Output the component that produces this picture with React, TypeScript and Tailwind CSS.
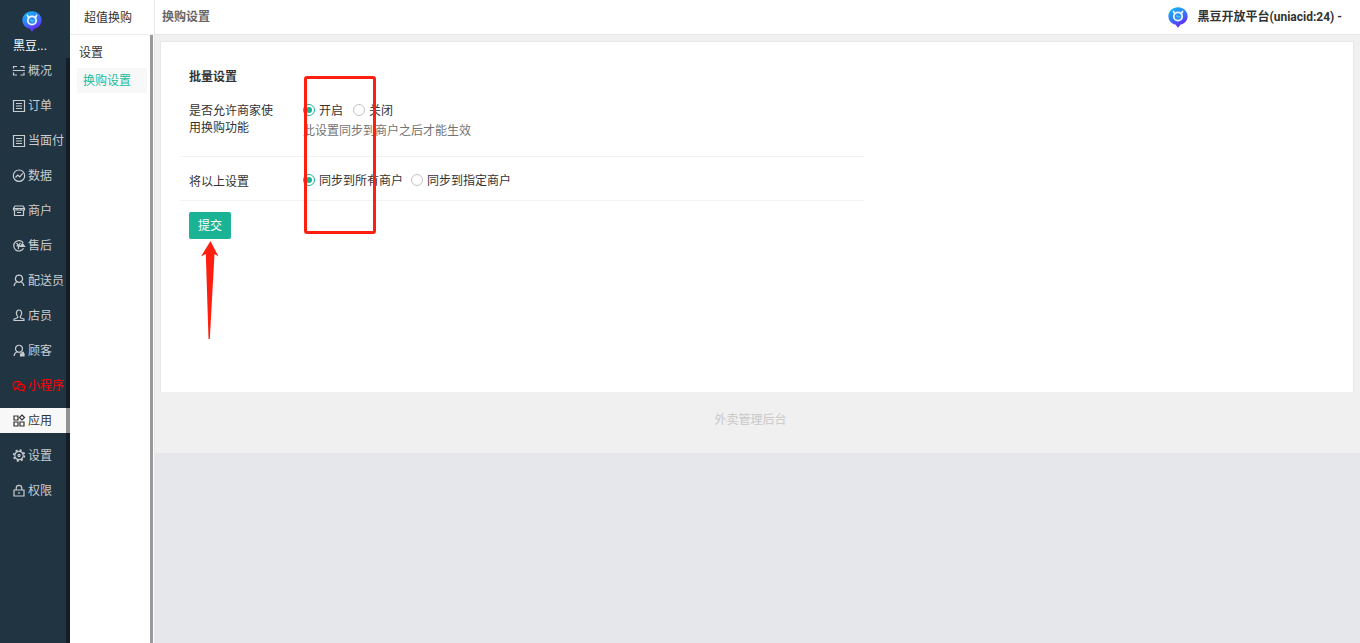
import React from "react";

type IconName =
  | "scan"
  | "list"
  | "chart"
  | "shop"
  | "refund"
  | "rider"
  | "clerk"
  | "customer"
  | "wechat"
  | "apps"
  | "gear"
  | "lock";

const iconShapes: Record<IconName, React.ReactNode> = {
  scan: (
    <path d="M1.5 4.5v-2H5M8.500 2.500h3.500v2M1.500 8.500v2.500H5M8.500 11H12V8.500M.8 6.500h12" />
  ),
  list: (
    <>
      <path d="M1.500 1.500v11h11v-11zM.8 1.500h12M4 4.500h6M4 7h6M4 9.500h6" />
    </>
  ),
  chart: (
    <>
      <circle cx="7" cy="6.700" r="5.700" />
      <path d="M3.500 8.500 5.700 6l2 1.800 3-3.400" />
    </>
  ),
  shop: (
    <>
      <path d="M3 2h8l1.500 2.500V6h-11V4.500zM1.500 4.500h11M2.500 6v5.500h9V6" />
      <path d="M5 8.500h4M5 4.500V6M9 4.500V6" />
    </>
  ),
  refund: (
    <>
      <path d="M11.500 9.300a5.200 5.200 0 1 1-.3-5.500" />
      <path d="m4.500 3.800 2 2.700 2-2.700M6.500 6.500v3.700M4.500 6.800h4" />
      <path d="M8.500 7.300h4L10.500 4.800z" fill="currentColor" />
    </>
  ),
  rider: (
    <path d="M7 1.200a3.500 3.500 0 0 1 1.700 6.600c2 .6 3 2 3.200 4.200M7 1.200a3.500 3.500 0 0 0-1.700 6.600c-2 .6-3 2-3.200 4.200M5.300 7.800c1 .6 2.400.6 3.400 0" />
  ),
  clerk: (
    <path d="M7 1C5 1 4.400 2.600 4.400 4.200c0 1.400.5 2.500 1.300 3.200v1.300L2 10.200v1.300h10v-1.300L8.300 8.700V7.400c.8-.7 1.300-1.800 1.300-3.200C9.600 2.600 9 1 7 1z" />
  ),
  customer: (
    <>
      <path d="M2.100 12c.2-2.200 1.200-3.600 3.200-4.200a3.500 3.500 0 1 1 3.400 0c-1 .6-2.400.6-3.400 0" />
      <path d="M8.500 9.800h3.500V12H8.500zM9.300 8.300h2v1.500" fill="currentColor" />
    </>
  ),
  wechat: (
    <>
      <path d="M5 9.400c-2.200 0-3.900-1.500-3.900-3.400C1.100 4 2.900 2.400 5.100 2.400c2 0 3.700 1.200 4 2.900" />
      <path d="M3 9l-.3 1.500 1.800-1" />
      <path d="M9.200 5.400c2 0 3.600 1.300 3.600 3 0 .9-.5 1.700-1.200 2.200l.3 1.300-1.500-.7c-2.700.5-4.800-.9-4.800-2.800 0-1.700 1.600-3 3.600-3z" />
      <path d="M3.300 5.200h1M6 5.200h1M7.300 8h1M10 8h1" />
    </>
  ),
  apps: (
    <>
      <path d="M2 2h4v4H2zM2 8h4v4H2zM8 8h4v4H8z" />
      <path d="m10 1 2.500 2.500L10 6 7.500 3.500z" />
    </>
  ),
  gear: (
    <>
      <circle cx="7" cy="6.500" r="4.200" />
      <circle cx="7" cy="6.500" r="5.400" strokeWidth="1.600" strokeDasharray="2.120 2.120" />
      <circle cx="7" cy="6.500" r="1.100" />
    </>
  ),
  lock: (
    <>
      <path d="M2 6h10v6H2zM4.200 6V4.200a2.800 2.800 0 0 1 5.600 0V6" />
      <path d="M7 8v2" />
    </>
  ),
};

const navItems: { label: string; icon: IconName }[] = [
  { label: "概况", icon: "scan" },
  { label: "订单", icon: "list" },
  { label: "当面付", icon: "list" },
  { label: "数据", icon: "chart" },
  { label: "商户", icon: "shop" },
  { label: "售后", icon: "refund" },
  { label: "配送员", icon: "rider" },
  { label: "店员", icon: "clerk" },
  { label: "顾客", icon: "customer" },
  { label: "小程序", icon: "wechat" },
  { label: "应用", icon: "apps" },
  { label: "设置", icon: "gear" },
  { label: "权限", icon: "lock" },
];

const NavIcon = ({ name }: { name: IconName }) => (
  <svg
    viewBox="0 0 14 14"
    className="h-[14px] w-[14px] shrink-0"
    fill="none"
    stroke="currentColor"
    strokeWidth="1.200"
    aria-hidden="true"
  >
    {iconShapes[name]}
  </svg>
);

const Logo = ({ id }: { id: string }) => (
  <svg viewBox="0 0 20 21" className="h-[21px] w-5" aria-hidden="true">
    <defs>
      <linearGradient id={id} x1="0" y1="0" x2="0.5" y2="1">
        <stop offset="0" stopColor="#12c0fa" />
        <stop offset="0.5" stopColor="#2f80f8" />
        <stop offset="1" stopColor="#6a28f5" />
      </linearGradient>
    </defs>
    <path
      d="M10 .3c5.400 0 9.600 4 9.600 8.900 0 4.300-3 7.300-7 8.400L10 20.700l-2.600-3.100c-4-1.100-7-4.100-7-8.400C.4 4.300 4.600.3 10 .3z"
      fill={`url(#${id})`}
    />
    <circle cx="10" cy="9.500" r="4.200" fill="#2f8cf8" stroke="#e9f6ff" strokeWidth="1.800" />
    <path d="M5.500 4.300 6.700 7M14.500 4.300 13.300 7" stroke="#e9f6ff" strokeWidth="1.700" strokeLinecap="round" />
    <path d="M8.600 8.300c.4 1.800 2.400 2.400 3.200.9" fill="none" stroke="#4fd4ff" strokeWidth="1.200" />
  </svg>
);

const Radio = ({
  name,
  label,
  defaultChecked,
}: {
  name: string;
  label: string;
  defaultChecked?: boolean;
}) => (
  <label className="flex items-start gap-1">
    <input
      type="radio"
      name={name}
      defaultChecked={defaultChecked}
      className="mt-px h-3 w-3 appearance-none rounded-full border border-[#c4c4c4] bg-white bg-clip-content p-[2px] checked:border-[#1ab394] checked:bg-[#1ab394]"
    />
    {label}
  </label>
);

const Sidebar = () => (
  <nav className="flex w-[70px] shrink-0 flex-col bg-[#213442] text-[#c9cdd0]">
    <div className="flex h-[58px] flex-col items-start gap-[2px] px-3 pt-[11px] text-white">
      <div className="pl-[10px]">
        <Logo id="brand-side" />
      </div>
      <span className="pl-px leading-6">黑豆...</span>
    </div>
    <ul className="flex flex-1 flex-col gap-[10px] border-r-4 border-[#131e28]">
      {navItems.map((item) => (
        <li key={item.label}>
          <a
            href="#"
            className={
              "-mr-1 flex h-[25px] items-center gap-[2px] whitespace-nowrap pl-3 " +
              (item.label === "应用"
                ? "border-r-4 border-[#929292] bg-[#f8f8f8] text-[#333]"
                : item.label === "小程序"
                  ? "text-[#f00]"
                  : "")
            }
          >
            <NavIcon name={item.icon} />
            {item.label}
          </a>
        </li>
      ))}
    </ul>
  </nav>
);

const SubMenu = () => (
  <aside className="flex w-[84px] shrink-0 flex-col bg-white">
    <h2 className="h-[35px] border-b border-[#ededed] pl-[14px] leading-9">超值换购</h2>
    <div className="mr-px flex-1 border-r-[3px] border-[#999] pt-[6px]">
      <h3 className="pl-[9px] leading-6">设置</h3>
      <a
        href="#"
        className="ml-[7px] mr-[3px] mt-[3px] block h-[25px] bg-[#f8f8f8] pl-[6px] leading-[27px] text-[#1abc9c]"
      >
        换购设置
      </a>
    </div>
  </aside>
);

// Red marks that point out the switches and the submit button
const Marks = () => (
  <div className="pointer-events-none" aria-hidden="true">
    <div className="absolute left-[143px] top-[34px] h-[158px] w-[72px] rounded-[3px] border-[3px] border-[#ff1f10]" />
    <svg viewBox="0 0 18 98" className="absolute left-10 top-[199px] h-[98px] w-[18px]">
      <path d="M9.500 0 17.500 15.500 13.500 13 8.800 98H7.500L4.800 13 0 15.500z" fill="#ff1f10" />
    </svg>
  </div>
);

const SettingsForm = () => (
  <form className="max-w-[703px] pl-[19px] pt-[25px]" onSubmit={(e) => e.preventDefault()}>
    <h3 className="pl-[9px] font-bold leading-5">批量设置</h3>
    <div
      role="radiogroup"
      aria-labelledby="allow-label"
      className="flex h-[70px] border-b border-[#eef3f4] pl-[9px] pt-4"
    >
      <div id="allow-label" className="w-[90px] shrink-0 leading-[17px]">
        是否允许商家使用换购功能
      </div>
      <div className="pl-6">
        <div className="flex gap-[10px] leading-[17px]">
          <Radio name="allow" label="开启" defaultChecked />
          <Radio name="allow" label="关闭" />
        </div>
        <p className="leading-[22px] text-[#737373]">此设置同步到商户之后才能生效</p>
      </div>
    </div>
    <div
      role="radiogroup"
      aria-labelledby="sync-label"
      className="flex h-11 border-b border-[#f3f3f3] pl-[9px] pt-4"
    >
      <div id="sync-label" className="w-[90px] shrink-0 leading-[18px]">
        将以上设置
      </div>
      <div className="flex gap-2 pl-6 leading-[17px]">
        <Radio name="sync" label="同步到所有商户" defaultChecked />
        <Radio name="sync" label="同步到指定商户" />
      </div>
    </div>
    <button
      type="submit"
      className="ml-[9px] mt-[11px] block h-[27px] rounded-[2px] bg-[#1ab394] px-[9px] text-white"
    >
      提交
    </button>
  </form>
);

const App = () => {
  return (
    <div className='flex min-h-screen bg-[#e6e7eb] font-["Liberation_Sans","Noto_Sans_CJK_SC",sans-serif] text-xs text-[#333]'>
      <Sidebar />
      <SubMenu />
      <div className="min-w-0 flex-1">
        {/* Top bar */}
        <header className="flex h-[35px] items-center justify-between border-b border-l border-[#e7e7e7] bg-white pl-[7px] pr-[18px]">
          <h1 className="font-bold text-[#666]">换购设置</h1>
          <button
            type="button"
            className='flex items-center gap-[10px] font-["Roboto","Noto_Sans_CJK_SC",sans-serif] font-bold'
          >
            <Logo id="brand-top" />
            <span>黑豆开放平台(uniacid:24) -</span>
          </button>
        </header>
        {/* Content */}
        <main className="border-l border-[#e7e7e7] bg-[#f0f0f0] px-[5px] pb-[5px] pt-[6px]">
          <section className="relative mr-px min-h-[351px] border border-b-0 border-[#e7e7e7] bg-white">
            <SettingsForm />
            <Marks />
          </section>
          <footer className="pb-4 pr-[14px] pt-4 text-center leading-6 text-[#c8c8c8]">
            外卖管理后台
          </footer>
        </main>
      </div>
    </div>
  );
};

export default App;
